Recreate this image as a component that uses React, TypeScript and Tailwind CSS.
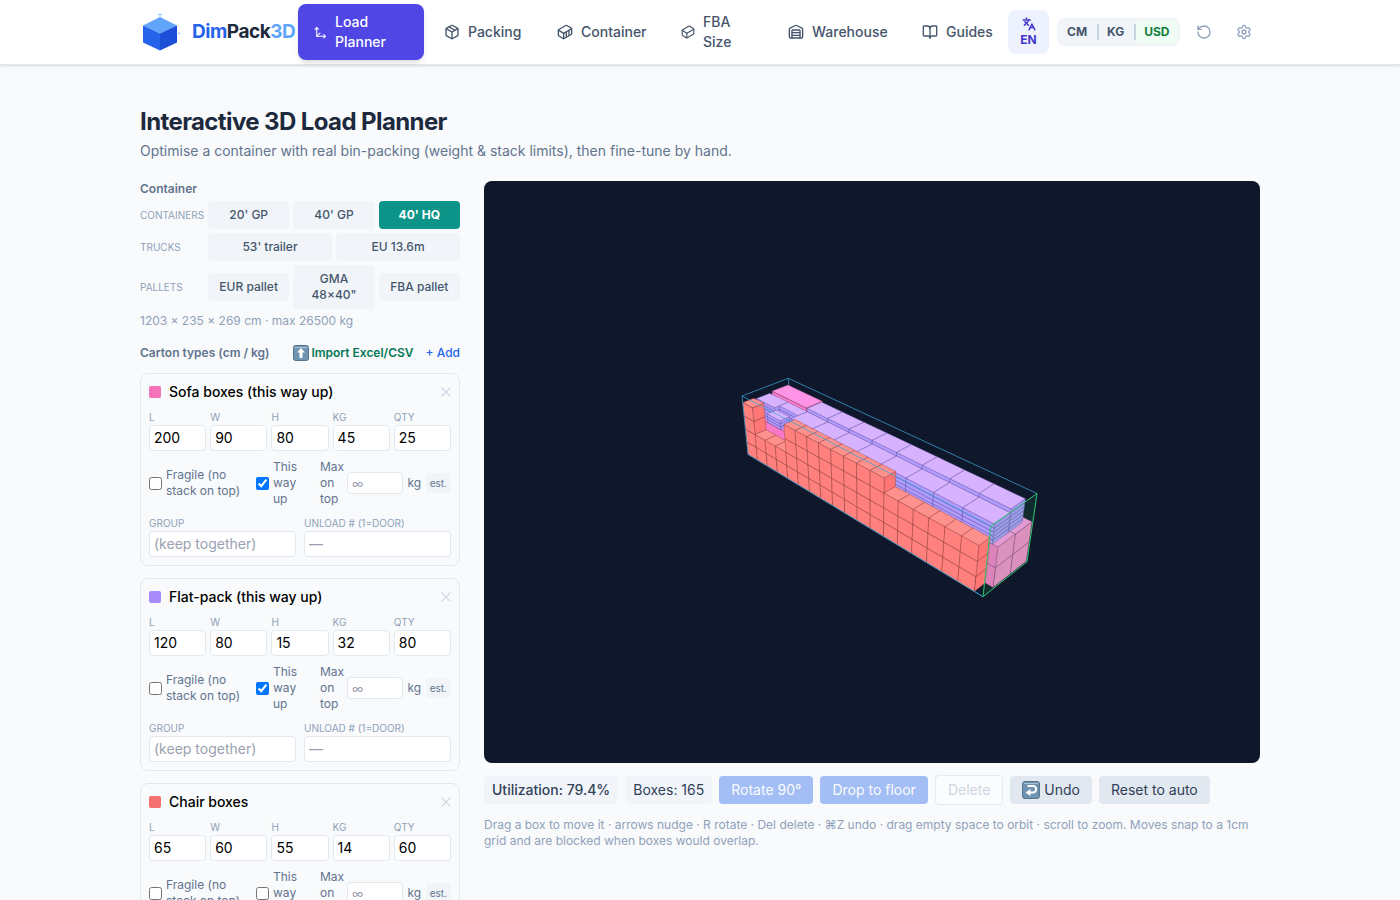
import React, { useState } from 'react';
import {
    BookOpen,
    Container,
    Languages,
    Move3d,
    Package,
    RotateCcw,
    Settings,
    Warehouse,
} from 'lucide-react';

/* ---------- 3D scene ---------- */

const LENGTH = 1203;
const WIDTH = 235;
const HEIGHT = 269;

type Point = [number, number];

// Perspective camera: x runs along the length, y is up, z goes across the width (all cm)
const project = (cx: number, cy: number, cz: number): Point => {
    const x = cx / LENGTH;
    const y = cy / HEIGHT;
    const z = cz / WIDTH;
    const w = 1 - 0.2618 * x - 0.047 * y + 0.049 * z;
    return [
        (264 + 104.36 * x - 18.12 * y + 59.1 * z) / w,
        (273.3 + 33.57 * x - 68.4 * y - 7.17 * z) / w,
    ];
};

const toPoints = (corners: [number, number, number][]) =>
    corners
        .map(([x, y, z]) => project(x, y, z).map((n) => n.toFixed(1)).join(','))
        .join(' ');

interface Skin {
    top: string;
    side: string;
    end: string;
    edge: string;
}

const PINK: Skin = { top: '#ff94e6', side: '#f779c8', end: '#f48acb', edge: '#7c3a68' };
const PURPLE: Skin = { top: '#d6b2ff', side: '#b09bff', end: '#ad98ff', edge: '#57488f' };
const CORAL: Skin = { top: '#ff918d', side: '#ff807c', end: '#ff7774', edge: '#7c3439' };

interface Carton {
    x: number;
    y: number;
    z: number;
    l: number;
    h: number;
    w: number;
    skin: Skin;
}

const buildLoad = (): Carton[] => {
    const load: Carton[] = [];

    // Sofa boxes on the floor, two lanes of two layers
    for (const z of [145, 55]) {
        for (let i = 0; i < 6; i++) {
            for (const y of [0, 80]) {
                load.push({ x: i * 200, y, z, l: 200, h: 80, w: 90, skin: PINK });
            }
        }
    }

    // Rear lane on top: one sofa box, then flat-packs
    load.push({ x: 17, y: 170, z: 135, l: 214, h: 80, w: 83, skin: PINK });
    for (let i = 2; i < 10; i++) {
        for (let n = 0; n < 6; n++) {
            load.push({ x: i * 118, y: 160 + n * 15, z: 135, l: 118, h: 15, w: 76, skin: PURPLE });
        }
    }

    // Front lane of flat-packs
    for (let i = 0; i < 10; i++) {
        const z = i === 0 ? 67 : i === 1 ? 90 : 55;
        for (let n = 0; n < 5; n++) {
            load.push({ x: i * 118, y: 160 + n * 15, z, l: 118, h: 15, w: 135 - z, skin: PURPLE });
        }
        if (i === 1) {
            for (let n = 0; n < 3; n++) {
                load.push({ x: 82, y: 160 + n * 13, z: 55, l: 82, h: 13, w: 47, skin: PURPLE });
            }
        }
    }

    // Chair boxes along the near wall
    const stacks = [4, 2, 2, 2, 4, 4, 4, 4, 4, 4, 4, 4, 3, 3, 3, 3, 3, 3];
    stacks.forEach((count, i) => {
        for (let n = 0; n < count; n++) {
            load.push({ x: i * 65, y: n * 60, z: 0, l: 65, h: 60, w: 55, skin: CORAL });
        }
    });

    return load;
};

const LOAD = buildLoad();

const CartonShape: React.FC<{ carton: Carton }> = ({ carton }) => {
    const { x, y, z, l, h, w, skin } = carton;
    const X = x + l;
    const Y = y + h;
    const Z = z + w;
    return (
        <g stroke={skin.edge} strokeWidth={0.6} strokeOpacity={0.6} strokeLinejoin="round">
            <polygon fill={skin.end} points={toPoints([[X, y, z], [X, y, Z], [X, Y, Z], [X, Y, z]])} />
            <polygon fill={skin.side} points={toPoints([[x, y, z], [X, y, z], [X, Y, z], [x, Y, z]])} />
            <polygon fill={skin.top} points={toPoints([[x, Y, z], [X, Y, z], [X, Y, Z], [x, Y, Z]])} />
        </g>
    );
};

const Viewport: React.FC = () => (
    <div className="aspect-[4/3] overflow-hidden rounded-lg bg-[#0f172a]">
        <svg viewBox="0 0 776 582" className="h-full w-full" role="img" aria-label="3D view of the load">
            <g fill="none" stroke="#2b7ea8" strokeWidth={1}>
                <polyline points={toPoints([[0, HEIGHT, WIDTH], [0, 0, WIDTH], [LENGTH, 0, WIDTH]])} />
                <polyline points={toPoints([[0, 0, WIDTH], [0, 0, 0], [LENGTH, 0, 0]])} />
            </g>
            {LOAD.map((carton, i) => (
                <CartonShape key={i} carton={carton} />
            ))}
            <g fill="none" stroke="#38a3d1" strokeWidth={1} strokeOpacity={0.75}>
                <polyline
                    points={toPoints([
                        [LENGTH, 0, 0],
                        [0, 0, 0],
                        [0, HEIGHT, 0],
                        [0, HEIGHT, WIDTH],
                        [LENGTH, HEIGHT, WIDTH],
                    ])}
                />
                <polyline points={toPoints([[0, HEIGHT, 0], [LENGTH, HEIGHT, 0]])} />
            </g>
            {/* Door */}
            <polygon
                fill="#22c55e"
                fillOpacity={0.12}
                stroke="#2fc474"
                strokeWidth={1}
                points={toPoints([
                    [LENGTH, 0, 0],
                    [LENGTH, 0, WIDTH],
                    [LENGTH, HEIGHT, WIDTH],
                    [LENGTH, HEIGHT, 0],
                ])}
            />
        </svg>
    </div>
);

/* ---------- Icons ---------- */

const LogoMark: React.FC = () => (
    <svg viewBox="0 0 40 40" className="h-10 w-10 shrink-0" aria-hidden="true">
        <path d="M20 5 37 13.500 20 21.500 3 13.500Z" fill="#60a5fa" />
        <path d="M3 13.500 20 21.500V38.500L3 30.500Z" fill="#2563eb" />
        <path d="M37 13.500 20 21.500V38.500L37 30.500Z" fill="#1d4ed8" />
        <path d="M20 5V2.500M18 2.500h4M38 21.500h2M39 20.500v2" stroke="#93c5fd" fill="none" />
    </svg>
);

const FlatBoxIcon: React.FC<{ className?: string }> = ({ className }) => (
    <svg
        viewBox="0 0 24 24"
        className={className}
        fill="none"
        stroke="currentColor"
        strokeWidth={2}
        strokeLinecap="round"
        strokeLinejoin="round"
        aria-hidden="true"
    >
        <path d="M22 7.700c0-.6-.4-1.200-.8-1.500l-6.300-3.900a1.720 1.720 0 0 0-1.700 0l-10.300 6c-.5.200-.9.800-.9 1.400v6.600c0 .5.400 1.200.8 1.500l6.300 3.900a1.720 1.720 0 0 0 1.700 0l10.300-6c.5-.3.900-1 .9-1.500Z" />
        <path d="M10 21.900V14L2.100 9.100" />
        <path d="m10 14 11.900-6.900" />
    </svg>
);

const UpTile: React.FC = () => (
    <svg viewBox="0 0 16 16" className="h-4 w-4" aria-hidden="true">
        <rect x=".5" y=".5" width="15" height="15" rx="2" fill="#6f93b0" stroke="#56758f" />
        <path d="M1.500 2.500h13" stroke="#a9c3d6" />
        <path d="M8 3 12 7.500H9.500V13h-3V7.500H4Z" fill="#fff" />
    </svg>
);

const ReturnTile: React.FC = () => (
    <svg viewBox="0 0 18 18" className="h-[18px] w-[18px]" aria-hidden="true">
        <rect x=".5" y=".5" width="17" height="17" rx="2.500" fill="#6f93b0" stroke="#56758f" />
        <path d="M2 2.500h14" stroke="#a9c3d6" />
        <path d="M5.500 5H11a3.200 3.200 0 0 1 0 6.400H7.500" fill="none" stroke="#fff" strokeWidth="2" />
        <path d="M8.500 8v7L3.500 11.500Z" fill="#fff" />
    </svg>
);

/* ---------- Header ---------- */

const navLinkClass =
    'flex items-center gap-2 rounded-lg py-2 pl-4 text-sm font-medium whitespace-nowrap text-slate-600';

const Header: React.FC = () => (
    <header className="border-b border-slate-200 bg-white shadow-sm">
        <div className="mx-auto flex h-16 max-w-6xl items-center px-4">
            <a href="#home" className="flex w-[158px] shrink-0 items-center gap-3 whitespace-nowrap">
                <LogoMark />
                <span className="text-[19px] font-bold tracking-tight text-slate-800">
                    <span className="text-[#2563eb]">Dim</span>Pack<span className="text-[#60a5fa]">3D</span>
                </span>
            </a>
            <nav className="flex shrink-0 items-center gap-1">
                <a
                    href="#load-planner"
                    className="flex w-[126px] items-center gap-2 rounded-lg bg-[#4f46e5] px-4 py-2 text-sm font-medium text-white shadow-md"
                >
                    <Move3d className="h-[13px] w-[13px] shrink-0" />
                    <span className="w-14">Load Planner</span>
                </a>
                <a href="#packing" className={`${navLinkClass} w-[109px]`}>
                    <Package className="h-4 w-4 shrink-0" />
                    Packing
                </a>
                <a href="#container" className={`${navLinkClass} w-[120px]`}>
                    <Container className="h-4 w-4 shrink-0" />
                    Container
                </a>
                <a href="#fba-size" className={`${navLinkClass} w-[103px]`}>
                    <FlatBoxIcon className="h-[14px] w-[14px] shrink-0" />
                    <span>FBA<br />Size</span>
                </a>
                <a href="#warehouse" className={`${navLinkClass} w-[130px]`}>
                    <Warehouse className="h-4 w-4 shrink-0" />
                    Warehouse
                </a>
                <a href="#guides" className={`${navLinkClass} w-[102px]`}>
                    <BookOpen className="h-4 w-4 shrink-0" />
                    Guides
                </a>
            </nav>
            <button
                type="button"
                className="flex w-[41px] shrink-0 flex-col items-center rounded-lg bg-[#eef2ff] py-1.5 text-xs font-bold text-[#4338ca]"
            >
                <Languages className="h-4 w-4 p-px" strokeWidth={2.5} />
                EN
            </button>
            <div className="ml-2 flex h-7 shrink-0 items-center rounded-lg bg-slate-100 text-xs font-bold text-slate-600">
                <button type="button" className="px-2.5">CM</button>
                <span className="h-4 w-0.5 bg-slate-300" />
                <button type="button" className="pr-2.5 pl-2">KG</button>
                <span className="h-4 w-0.5 bg-slate-300" />
                <button type="button" className="mr-0.5 rounded-md bg-[#f0fdf4] px-2 py-1 text-[#15803d]">USD</button>
            </div>
            <button type="button" aria-label="Reset" className="ml-4 text-slate-400">
                <RotateCcw className="h-4 w-4" />
            </button>
            <button type="button" aria-label="Settings" className="ml-6 text-slate-400">
                <Settings className="h-4 w-4" />
            </button>
        </div>
    </header>
);

/* ---------- Container picker ---------- */

const PRESETS = [
    { label: 'Containers', items: ["20' GP", "40' GP", "40' HQ"] },
    { label: 'Trucks', items: ["53' trailer", 'EU 13.6m'] },
    { label: 'Pallets', items: ['EUR pallet', 'GMA 48×40"', 'FBA pallet'] },
];

const ContainerPicker: React.FC = () => {
    const [selected, setSelected] = useState("40' HQ");
    return (
        <section>
            <h2 className="text-xs font-semibold text-slate-500">Container</h2>
            <div className="mt-1 flex flex-col gap-1">
                {PRESETS.map((row) => (
                    <div key={row.label} className="flex items-center gap-1">
                        <span className="w-16 shrink-0 text-[10px] whitespace-nowrap text-slate-400 uppercase">
                            {row.label}
                        </span>
                        <div className="flex flex-1 items-center gap-1">
                            {row.items.map((item) => (
                                <button
                                    key={item}
                                    type="button"
                                    onClick={() => setSelected(item)}
                                    className={
                                        item === selected
                                            ? 'flex-1 basis-0 rounded bg-[#0d9488] px-2 py-1.5 text-xs font-bold text-white'
                                            : 'flex-1 basis-0 rounded bg-slate-100 px-2 py-1.5 text-xs font-medium text-slate-600'
                                    }
                                >
                                    {item}
                                </button>
                            ))}
                        </div>
                    </div>
                ))}
            </div>
            <p className="mt-1 text-xs text-slate-400">1203 × 235 × 269 cm · max 26500 kg</p>
        </section>
    );
};

/* ---------- Carton cards ---------- */

interface CartonType {
    name: string;
    swatch: string;
    dims: number[];
    upright: boolean;
}

const CARTON_TYPES: CartonType[] = [
    { name: 'Sofa boxes (this way up)', swatch: 'bg-[#f472b6]', dims: [200, 90, 80, 45, 25], upright: true },
    { name: 'Flat-pack (this way up)', swatch: 'bg-[#a78bfa]', dims: [120, 80, 15, 32, 80], upright: true },
    { name: 'Chair boxes', swatch: 'bg-[#f87171]', dims: [65, 60, 55, 14, 60], upright: false },
];

const FIELDS = ['L', 'W', 'H', 'KG', 'QTY'];

const inputClass =
    'block h-[26px] w-full rounded border border-slate-200 bg-white px-1 pb-0.5 text-sm text-black placeholder:text-gray-400';

const CartonCard: React.FC<{ type: CartonType }> = ({ type }) => (
    <div className="rounded-lg border border-slate-200 p-2">
        <div className="flex items-center gap-2">
            <span className={`h-3 w-3 rounded-xs ${type.swatch}`} />
            <input
                aria-label="Carton name"
                defaultValue={type.name}
                className="h-5 min-w-0 flex-1 bg-transparent text-sm font-medium text-black"
            />
            <button type="button" aria-label="Remove" className="text-slate-300">
                <svg viewBox="0 0 10 10" className="h-[10px] w-[10px]" stroke="currentColor" strokeWidth={1.2}>
                    <path d="M.7.7 9.300 9.300M9.300.7.7 9.300" />
                </svg>
            </button>
        </div>
        <div className="mt-2 grid grid-cols-5 gap-1">
            {FIELDS.map((field, i) => (
                <label key={field} className="block text-[10px] leading-[15px] text-slate-400">
                    {field}
                    <input defaultValue={type.dims[i]} className={inputClass} />
                </label>
            ))}
        </div>
        <div className="mt-2 flex items-center gap-3 text-xs text-slate-500">
            <label className="flex w-[95px] shrink-0 items-center gap-1">
                <input type="checkbox" className="h-[13px] w-[13px] shrink-0" />
                <span className="whitespace-nowrap">Fragile (no<br />stack on top)</span>
            </label>
            <label className="flex w-[52px] shrink-0 items-center gap-1">
                <input
                    type="checkbox"
                    defaultChecked={type.upright}
                    className="h-[13px] w-[13px] shrink-0 accent-[#0075ff]"
                />
                <span className="w-6">This way up</span>
            </label>
            <div className="flex min-w-0 flex-1 items-center justify-between">
                <label className="flex items-center gap-1">
                    <span className="w-[23px]">Max on top</span>
                    <input
                        placeholder="∞"
                        className="h-[22px] w-14 rounded border border-slate-200 bg-white px-1 text-xs placeholder:text-gray-400"
                    />
                </label>
                <span>kg</span>
                <button type="button" className="rounded bg-slate-100 px-1 text-[10px] leading-5 text-slate-500">
                    est.
                </button>
            </div>
        </div>
        <div className="mt-2 grid grid-cols-2 gap-2">
            <label className="block text-[10px] leading-4 text-slate-400">
                GROUP
                <input placeholder="(keep together)" className={inputClass} />
            </label>
            <label className="block text-[10px] leading-4 text-slate-400">
                UNLOAD # (1=DOOR)
                <input placeholder="—" className={inputClass} />
            </label>
        </div>
    </div>
);

const Sidebar: React.FC = () => (
    <aside>
        <ContainerPicker />
        <div className="mt-4 flex items-center text-xs font-semibold">
            <h2 className="flex-1 text-slate-500">Carton types (cm / kg)</h2>
            <button type="button" className="flex h-4 items-center gap-0.5 text-[#047857]">
                <UpTile />
                Import Excel/CSV
            </button>
            <button type="button" className="ml-3 font-medium text-[#2563eb]">+ Add</button>
        </div>
        <div className="mt-3 flex flex-col gap-3">
            {CARTON_TYPES.map((type) => (
                <CartonCard key={type.name} type={type} />
            ))}
        </div>
    </aside>
);

/* ---------- Toolbar ---------- */

const Toolbar: React.FC = () => (
    <div className="mt-3 flex flex-wrap items-center gap-[7px] text-sm text-slate-700">
        <span className="rounded bg-slate-100 px-2 py-1 font-medium">Utilization: 79.4%</span>
        <span className="rounded bg-slate-100 px-2 py-1">Boxes: 165</span>
        <button type="button" disabled className="rounded bg-[#2563eb] px-3 py-1 text-white opacity-40">
            Rotate 90°
        </button>
        <button type="button" disabled className="rounded bg-[#2563eb] px-3 py-1 text-white opacity-40">
            Drop to floor
        </button>
        <button
            type="button"
            disabled
            className="rounded border border-slate-300 bg-white px-3 py-1 text-slate-400 opacity-40"
        >
            Delete
        </button>
        <button type="button" className="flex items-center gap-1 rounded bg-slate-200 px-3 py-1">
            <ReturnTile />
            Undo
        </button>
        <button type="button" className="rounded bg-slate-200 px-3 py-1">Reset to auto</button>
    </div>
);

export default function App() {
    return (
        <div className="min-h-screen bg-slate-50 font-['Inter',sans-serif] text-slate-800">
            <Header />
            <main className="mx-auto max-w-6xl px-4 py-10">
                <h1 className="text-2xl leading-[34px] font-bold tracking-tight">Interactive 3D Load Planner</h1>
                <p className="mt-0.5 text-sm text-slate-500">
                    Optimise a container with real bin-packing (weight &amp; stack limits), then fine-tune by hand.
                </p>
                <div className="mt-5 grid grid-cols-[320px_1fr] gap-6">
                    <Sidebar />
                    <section>
                        <Viewport />
                        <Toolbar />
                        <p className="mt-3 text-xs text-slate-400">
                            Drag a box to move it · arrows nudge · R rotate · Del delete · ⌘Z undo · drag empty space to
                            orbit · scroll to zoom. Moves snap to a 1cm grid and are blocked when boxes would overlap.
                        </p>
                    </section>
                </div>
            </main>
        </div>
    );
}
